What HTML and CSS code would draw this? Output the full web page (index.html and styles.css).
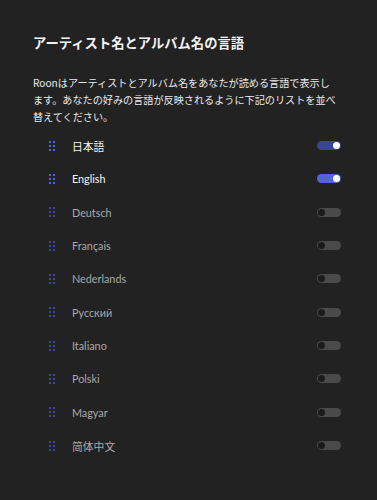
FILE: index.html
```html
<!DOCTYPE html>
<html lang="ja">
<head>
    <meta charset="UTF-8">
    <meta name="viewport" content="width=device-width, initial-scale=1.0">
    <title>アーティスト名とアルバム名の言語</title>
    <link rel="stylesheet" href="styles.css">
</head>
<body>

    <div class="panel">
        <h1>アーティスト名とアルバム名の言語</h1>
        <p class="intro">Roonはアーティストとアルバム名をあなたが読める言語で表示します。あなたの好みの言語が反映されるように下記のリストを並べ替えてください。</p>

        <ul class="langs">
            <li class="lang on">
                <svg class="grip" width="6" height="10" viewBox="0 0 6 10"><rect x="0" y="0" width="2" height="2"/><rect x="4" y="0" width="2" height="2"/><rect x="0" y="4" width="2" height="2"/><rect x="4" y="4" width="2" height="2"/><rect x="0" y="8" width="2" height="2"/><rect x="4" y="8" width="2" height="2"/></svg>
                <span class="name">日本語</span>
                <span class="toggle dim"></span>
            </li>
            <li class="lang on">
                <svg class="grip" width="6" height="10" viewBox="0 0 6 10"><rect x="0" y="0" width="2" height="2"/><rect x="4" y="0" width="2" height="2"/><rect x="0" y="4" width="2" height="2"/><rect x="4" y="4" width="2" height="2"/><rect x="0" y="8" width="2" height="2"/><rect x="4" y="8" width="2" height="2"/></svg>
                <span class="name">English</span>
                <span class="toggle"></span>
            </li>
            <li class="lang">
                <svg class="grip" width="6" height="10" viewBox="0 0 6 10"><rect x="0" y="0" width="2" height="2"/><rect x="4" y="0" width="2" height="2"/><rect x="0" y="4" width="2" height="2"/><rect x="4" y="4" width="2" height="2"/><rect x="0" y="8" width="2" height="2"/><rect x="4" y="8" width="2" height="2"/></svg>
                <span class="name">Deutsch</span>
                <span class="toggle"></span>
            </li>
            <li class="lang">
                <svg class="grip" width="6" height="10" viewBox="0 0 6 10"><rect x="0" y="0" width="2" height="2"/><rect x="4" y="0" width="2" height="2"/><rect x="0" y="4" width="2" height="2"/><rect x="4" y="4" width="2" height="2"/><rect x="0" y="8" width="2" height="2"/><rect x="4" y="8" width="2" height="2"/></svg>
                <span class="name">Français</span>
                <span class="toggle"></span>
            </li>
            <li class="lang">
                <svg class="grip" width="6" height="10" viewBox="0 0 6 10"><rect x="0" y="0" width="2" height="2"/><rect x="4" y="0" width="2" height="2"/><rect x="0" y="4" width="2" height="2"/><rect x="4" y="4" width="2" height="2"/><rect x="0" y="8" width="2" height="2"/><rect x="4" y="8" width="2" height="2"/></svg>
                <span class="name">Nederlands</span>
                <span class="toggle"></span>
            </li>
            <li class="lang">
                <svg class="grip" width="6" height="10" viewBox="0 0 6 10"><rect x="0" y="0" width="2" height="2"/><rect x="4" y="0" width="2" height="2"/><rect x="0" y="4" width="2" height="2"/><rect x="4" y="4" width="2" height="2"/><rect x="0" y="8" width="2" height="2"/><rect x="4" y="8" width="2" height="2"/></svg>
                <span class="name">Русский</span>
                <span class="toggle"></span>
            </li>
            <li class="lang">
                <svg class="grip" width="6" height="10" viewBox="0 0 6 10"><rect x="0" y="0" width="2" height="2"/><rect x="4" y="0" width="2" height="2"/><rect x="0" y="4" width="2" height="2"/><rect x="4" y="4" width="2" height="2"/><rect x="0" y="8" width="2" height="2"/><rect x="4" y="8" width="2" height="2"/></svg>
                <span class="name">Italiano</span>
                <span class="toggle"></span>
            </li>
            <li class="lang">
                <svg class="grip" width="6" height="10" viewBox="0 0 6 10"><rect x="0" y="0" width="2" height="2"/><rect x="4" y="0" width="2" height="2"/><rect x="0" y="4" width="2" height="2"/><rect x="4" y="4" width="2" height="2"/><rect x="0" y="8" width="2" height="2"/><rect x="4" y="8" width="2" height="2"/></svg>
                <span class="name">Polski</span>
                <span class="toggle"></span>
            </li>
            <li class="lang">
                <svg class="grip" width="6" height="10" viewBox="0 0 6 10"><rect x="0" y="0" width="2" height="2"/><rect x="4" y="0" width="2" height="2"/><rect x="0" y="4" width="2" height="2"/><rect x="4" y="4" width="2" height="2"/><rect x="0" y="8" width="2" height="2"/><rect x="4" y="8" width="2" height="2"/></svg>
                <span class="name">Magyar</span>
                <span class="toggle"></span>
            </li>
            <li class="lang">
                <svg class="grip" width="6" height="10" viewBox="0 0 6 10"><rect x="0" y="0" width="2" height="2"/><rect x="4" y="0" width="2" height="2"/><rect x="0" y="4" width="2" height="2"/><rect x="4" y="4" width="2" height="2"/><rect x="0" y="8" width="2" height="2"/><rect x="4" y="8" width="2" height="2"/></svg>
                <span class="name">简体中文</span>
                <span class="toggle"></span>
            </li>
        </ul>
    </div>

</body>
</html>
```

FILE: styles.css
```css
body {
    font-family: Lato, "Noto Sans CJK JP", sans-serif;
    background-color: #222222;
    color: #e6e6e6;
    margin: 0;
    padding: 0;
}
.panel {
    padding: 33px 36px 0 33px;
}
h1 {
    font-family: "Noto Sans CJK JP", sans-serif;
    font-size: 13.3px;
    font-weight: 700;
    line-height: 20px;
    color: #f2f2f2;
    margin: 0 0 21px;
}
.intro {
    font-family: "Noto Sans CJK JP", sans-serif;
    font-size: 10.15px;
    line-height: 17px;
    color: #ececec;
    max-width: 306px;
    margin: 0 0 4px;
}
.langs {
    list-style: none;
    margin: 0;
    padding: 0;
}
.lang {
    display: flex;
    align-items: center;
    height: 33.33px;
    font-size: 10.8px;
    color: #a9a9a9;
}
.lang.on {
    color: #f4f4f4;
}
.grip {
    margin-left: 16px;
    margin-right: 17px;
    fill: #3c4a9e;
}
.lang.on .grip {
    fill: #4d64e6;
}
.name {
    flex: 1;
}
.toggle {
    position: relative;
    width: 24px;
    height: 9px;
    border-radius: 5px;
    background-color: #4a4a4a;
}
.toggle::after {
    content: "";
    position: absolute;
    top: 1px;
    left: 1px;
    width: 7px;
    height: 7px;
    border-radius: 50%;
    background-color: #1b1b1b;
}
.lang.on .toggle {
    background-color: #5563d8;
}
.lang.on .toggle.dim {
    background-color: #3a4590;
}
.lang.on .toggle::after {
    left: auto;
    right: 1px;
    background-color: #ffffff;
}
```
